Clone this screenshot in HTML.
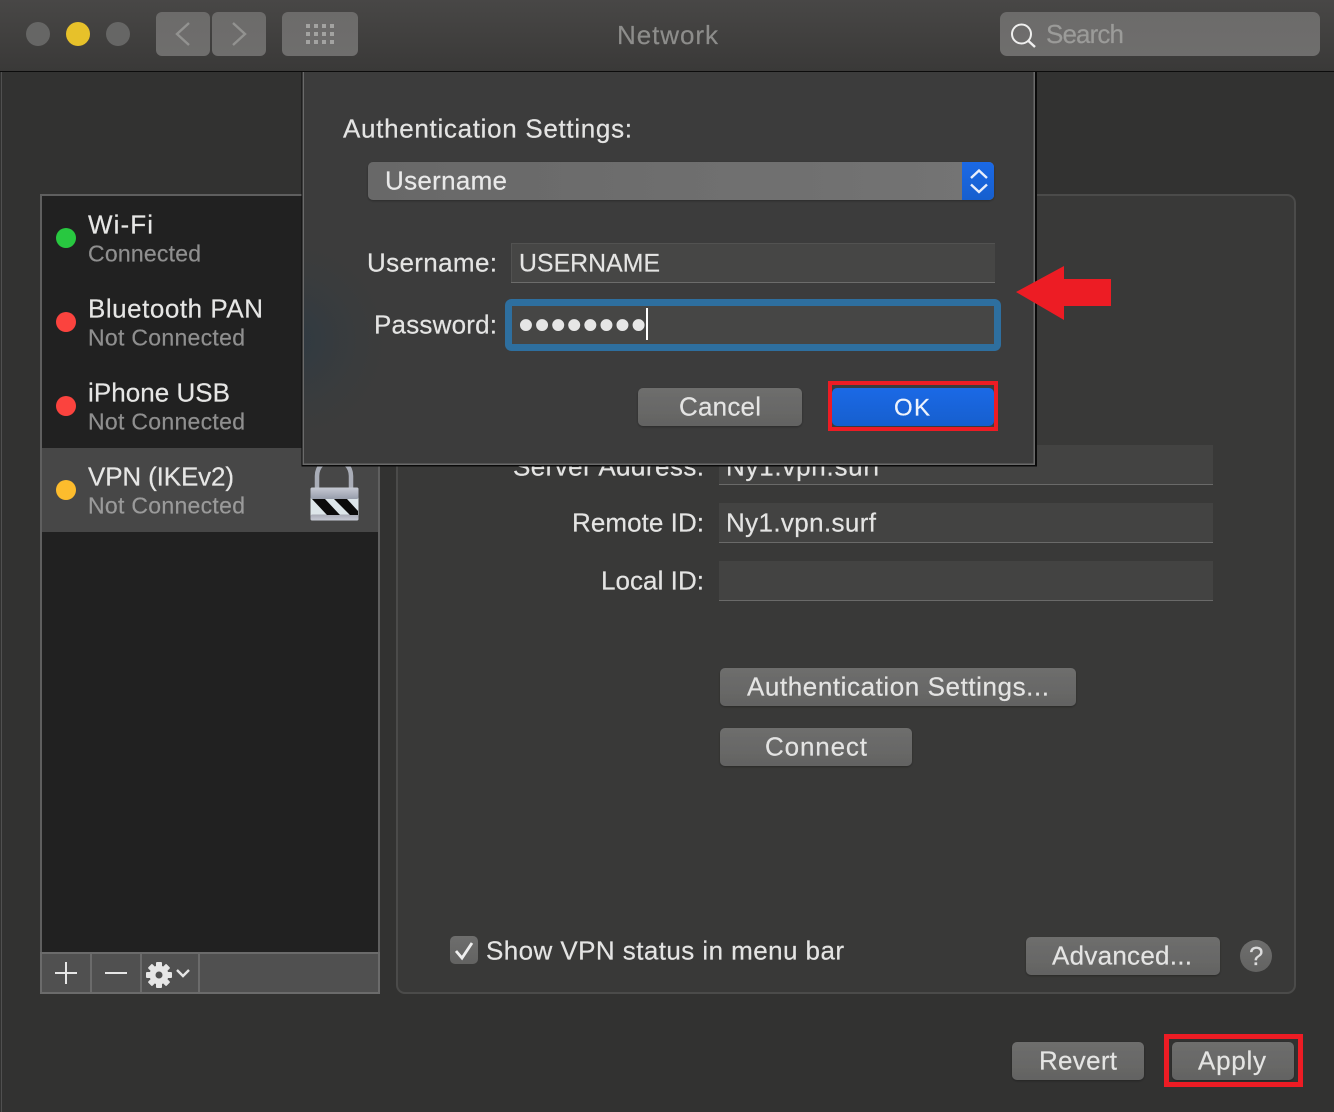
<!DOCTYPE html>
<html><head><meta charset="utf-8"><title>Network</title>
<style>
html,body{margin:0;padding:0;background:#323231;width:1334px;height:1112px;overflow:hidden}
svg{display:block}
text{font-family:"Liberation Sans",sans-serif;font-size:26px;fill:#e4e4e3;stroke:#e4e4e3;stroke-width:.2px}
.s{fill:#8f8f8f;stroke:#8f8f8f;font-size:23px}
.n{fill:#e6e6e5}
</style></head><body>
<svg width="1334" height="1112" viewBox="0 0 1334 1112" xmlns="http://www.w3.org/2000/svg">
<defs>
<linearGradient id="tb" x1="0" y1="0" x2="0" y2="1"><stop offset="0" stop-color="#484746"/><stop offset="1" stop-color="#3a3938"/></linearGradient>
<linearGradient id="btn" x1="0" y1="0" x2="0" y2="1"><stop offset="0" stop-color="#6e6e6d"/><stop offset="1" stop-color="#636362"/></linearGradient>
<linearGradient id="tbtn" x1="0" y1="0" x2="0" y2="1"><stop offset="0" stop-color="#6c6b6a"/><stop offset="1" stop-color="#6f6e6d"/></linearGradient>
<linearGradient id="sel" x1="0" y1="0" x2="1" y2="0"><stop offset="0" stop-color="#686868"/><stop offset="1" stop-color="#747474"/></linearGradient>
<linearGradient id="blue" x1="0" y1="0" x2="0" y2="1"><stop offset="0" stop-color="#1b69e6"/><stop offset="1" stop-color="#165fce"/></linearGradient>
<radialGradient id="tint" gradientUnits="userSpaceOnUse" cx="290" cy="340" r="115"><stop offset="0" stop-color="#2e3a43"/><stop offset="1" stop-color="#3c3c3c" stop-opacity="0"/></radialGradient>
<linearGradient id="lk1" x1="0" y1="0" x2="0" y2="1"><stop offset="0" stop-color="#c6cad3"/><stop offset="1" stop-color="#979dab"/></linearGradient>
<linearGradient id="lk2" x1="0" y1="0" x2="0" y2="1"><stop offset="0" stop-color="#a8abb6"/><stop offset="1" stop-color="#c5c9d3"/></linearGradient>
<filter id="sh" x="-5%" y="-20%" width="110%" height="150%"><feDropShadow dx="0" dy="1" stdDeviation="1" flood-color="#000" flood-opacity=".3"/></filter>
</defs>

<!-- window -->
<rect width="1334" height="1112" fill="#323231"/>
<rect x="1" y="0" width="1" height="1112" fill="#505050"/>
<rect width="1334" height="71" fill="url(#tb)"/>
<rect y="71" width="1334" height="1" fill="#0c0c0c"/>

<!-- traffic lights -->
<circle cx="38" cy="34" r="12" fill="#666665"/>
<circle cx="78" cy="34" r="12" fill="#e7c12a"/>
<circle cx="118" cy="34" r="12" fill="#666665"/>

<!-- nav -->
<rect x="156" y="12" width="54" height="44" rx="6" fill="url(#tbtn)"/>
<rect x="212" y="12" width="54" height="44" rx="6" fill="url(#tbtn)"/>
<path d="M189 23L177 34L189 45" fill="none" stroke="#929290" stroke-width="2.400"/>
<path d="M233 23L245 34L233 45" fill="none" stroke="#929290" stroke-width="2.400"/>
<rect x="282" y="12" width="76" height="44" rx="6" fill="url(#tbtn)"/>
<g fill="#a3a3a1">
<rect x="306" y="24" width="4" height="4"/><rect x="314" y="24" width="4" height="4"/><rect x="322" y="24" width="4" height="4"/><rect x="330" y="24" width="4" height="4"/>
<rect x="306" y="32" width="4" height="4"/><rect x="314" y="32" width="4" height="4"/><rect x="322" y="32" width="4" height="4"/><rect x="330" y="32" width="4" height="4"/>
<rect x="306" y="40" width="4" height="4"/><rect x="314" y="40" width="4" height="4"/><rect x="322" y="40" width="4" height="4"/><rect x="330" y="40" width="4" height="4"/>
</g>
<text x="617" y="44" textLength="101" style="fill:#8d8d8b;stroke:#8d8d8b">Network</text>

<!-- search -->
<rect x="1000" y="12" width="320" height="44" rx="7" fill="url(#tbtn)"/>
<circle cx="1021.500" cy="34" r="9.500" fill="none" stroke="#efefee" stroke-width="2"/>
<path d="M1028.500 41L1035 47" stroke="#efefee" stroke-width="2.400" fill="none"/>
<text x="1046" y="43" textLength="78" style="fill:#9b9b99;stroke:#9b9b99">Search</text>

<!-- right panel -->
<rect x="397" y="195" width="898" height="798" rx="8" fill="#393938" stroke="#4b4b4a" stroke-width="2"/>

<!-- sidebar -->
<rect x="41" y="195" width="338" height="798" fill="#212121" stroke="#5f5f5f" stroke-width="2"/>
<rect x="42" y="448" width="336" height="84" fill="#474747"/>
<rect x="41" y="953" width="338" height="40" fill="#505050" stroke="#6b6b6b" stroke-width="2"/>
<rect x="90" y="953" width="2" height="40" fill="#6b6b6b"/>
<rect x="140" y="953" width="2" height="40" fill="#6b6b6b"/>
<rect x="198" y="953" width="2" height="40" fill="#6b6b6b"/>
<path d="M55 973H77M66 962V984M105 973H127" stroke="#e6e6e6" stroke-width="2" fill="none"/>
<g fill="#e6e6e6">
<circle cx="159" cy="975" r="9.500"/>
<rect x="156" y="962" width="6" height="26" rx="1"/>
<rect x="156" y="962" width="6" height="26" rx="1" transform="rotate(45 159 975)"/>
<rect x="156" y="962" width="6" height="26" rx="1" transform="rotate(90 159 975)"/>
<rect x="156" y="962" width="6" height="26" rx="1" transform="rotate(135 159 975)"/>
</g>
<circle cx="159" cy="975" r="3.500" fill="#505050"/>
<path d="M177 970L183 976L189 970" fill="none" stroke="#e6e6e6" stroke-width="2.400"/>

<!-- status dots -->
<circle cx="66" cy="238" r="10" fill="#28c840"/>
<circle cx="66" cy="322" r="10" fill="#fb433e"/>
<circle cx="66" cy="406" r="10" fill="#fb433e"/>
<circle cx="66" cy="490" r="10" fill="#fdbc2d"/>

<text class="n" x="88" y="233.500" textLength="65">Wi-Fi</text>
<text class="s" x="88" y="261.500" textLength="113">Connected</text>
<text class="n" x="88" y="317.500" textLength="175">Bluetooth PAN</text>
<text class="s" x="88" y="345.500" textLength="157">Not Connected</text>
<text class="n" x="88" y="401.500" textLength="142">iPhone USB</text>
<text class="s" x="88" y="429.500" textLength="157">Not Connected</text>
<text class="n" x="88" y="485.500" textLength="146">VPN (IKEv2)</text>
<text class="s" x="88" y="513.500" textLength="157" style="fill:#9a9a9a;stroke:#9a9a9a">Not Connected</text>

<!-- lock -->
<path d="M317 490V476A17 17 0 0 1 351 476V490" fill="none" stroke="#a9adb7" stroke-width="4.500"/>
<rect x="310.500" y="487.500" width="48" height="33" rx="2" fill="#dde6ea"/>
<rect x="310.500" y="487.500" width="48" height="11.500" rx="2" fill="url(#lk1)"/>
<rect x="310.500" y="514.500" width="48" height="6" rx="2" fill="url(#lk2)"/>
<path d="M312 499H325L340 515H327ZM334 499H347L358 511V515H350Z" fill="#0b0b0b"/>

<!-- form -->
<rect x="719" y="445" width="494" height="40" fill="#434342"/><rect x="719" y="484" width="494" height="1" fill="#6a6a69"/>
<rect x="719" y="503" width="494" height="40" fill="#434342"/><rect x="719" y="542" width="494" height="1" fill="#6a6a69"/>
<rect x="719" y="561" width="494" height="40" fill="#434342"/><rect x="719" y="600" width="494" height="1" fill="#6a6a69"/>
<text x="513" y="475.500" textLength="191">Server Address:</text>
<text x="726" y="475.500" textLength="154">Ny1.vpn.surf</text>
<text x="572" y="531.500" textLength="132">Remote ID:</text>
<text x="726" y="531.500" textLength="150">Ny1.vpn.surf</text>
<text x="601" y="589.500" textLength="103">Local ID:</text>

<rect x="720" y="668" width="356" height="38" rx="5" fill="url(#btn)" filter="url(#sh)"/>
<text x="747" y="695.500" textLength="302">Authentication Settings...</text>
<rect x="720" y="728" width="192" height="38" rx="5" fill="url(#btn)" filter="url(#sh)"/>
<text x="765" y="755.500" textLength="102">Connect</text>

<rect x="450" y="936" width="28" height="28" rx="5" fill="url(#btn)"/>
<path d="M456 951L462 958L472 943" fill="none" stroke="#efefef" stroke-width="2.800"/>
<text x="486" y="959.500" textLength="358">Show VPN status in menu bar</text>

<rect x="1026" y="937" width="194" height="38" rx="5" fill="url(#btn)" filter="url(#sh)"/>
<text x="1052" y="964.500" textLength="140">Advanced...</text>
<circle cx="1256" cy="956" r="16" fill="url(#btn)"/>
<text x="1249" y="965" textLength="14" style="fill:#dcdcdc;stroke:#dcdcdc">?</text>

<rect x="1012" y="1042" width="132" height="38" rx="5" fill="url(#btn)" filter="url(#sh)"/>
<text x="1039" y="1069.500" textLength="78">Revert</text>
<rect x="1172" y="1042" width="122" height="38" rx="5" fill="url(#btn)" filter="url(#sh)"/>
<text x="1198" y="1069.500" textLength="68">Apply</text>
<rect x="1166.500" y="1036.500" width="134" height="48" fill="none" stroke="#ed1c24" stroke-width="5"/>

<!-- dialog -->
<rect x="301.500" y="72" width="735.500" height="394.500" fill="#0a0a0a"/>
<rect x="302.500" y="72" width="732.500" height="393" fill="#6a6a6a"/>
<rect x="304" y="72" width="729.500" height="391.500" fill="#3c3c3c"/>
<rect x="304" y="72" width="729.500" height="391.500" fill="url(#tint)"/>

<text x="343" y="137.500" textLength="289">Authentication Settings:</text>

<rect x="368" y="162" width="626" height="38" rx="5" fill="url(#sel)" filter="url(#sh)"/>
<path d="M962 162H989a5 5 0 0 1 5 5V195a5 5 0 0 1 -5 5H962Z" fill="url(#blue)"/>
<path d="M971 178L979 170.500L987 178M971 184.500L979 192L987 184.500" fill="none" stroke="#e8eefb" stroke-width="2.400"/>
<text x="385" y="189.500" textLength="122" style="fill:#e9e9e9;stroke:#e9e9e9">Username</text>

<text x="367" y="271.500" textLength="130">Username:</text>
<rect x="511" y="243" width="484" height="40" fill="#464645"/>
<rect x="511" y="243" width="484" height="1" fill="#525251"/>
<rect x="511" y="243" width="1" height="40" fill="#525251"/>
<rect x="511" y="282" width="484" height="1" fill="#6c6c6b"/>
<text x="519" y="271.500" textLength="141" style="font-size:24.800px">USERNAME</text>

<text x="374" y="333.500" textLength="123">Password:</text>
<rect x="508.500" y="302.500" width="489" height="45" rx="3" fill="#464645" stroke="#2e6f9f" stroke-width="7"/>
<text x="518.300" y="339.500" textLength="128" style="font-size:44px;fill:#e6e6e6;stroke:none">••••••••</text>
<rect x="646" y="308" width="2" height="32" fill="#fff"/>

<rect x="638" y="388" width="164" height="38" rx="5" fill="url(#btn)" filter="url(#sh)"/>
<text x="679" y="415.500" textLength="82">Cancel</text>
<rect x="832" y="388" width="162" height="38" rx="5" fill="url(#blue)"/>
<text x="894" y="415.500" textLength="36" style="font-size:24px;fill:#eef3fc;stroke:#eef3fc">OK</text>
<rect x="830" y="383" width="166" height="46" fill="none" stroke="#ed1c24" stroke-width="4"/>

<!-- arrow -->
<path d="M1016 292L1064 266V279H1111V306H1064V320Z" fill="#ed1c24"/>
</svg>
</body></html>
